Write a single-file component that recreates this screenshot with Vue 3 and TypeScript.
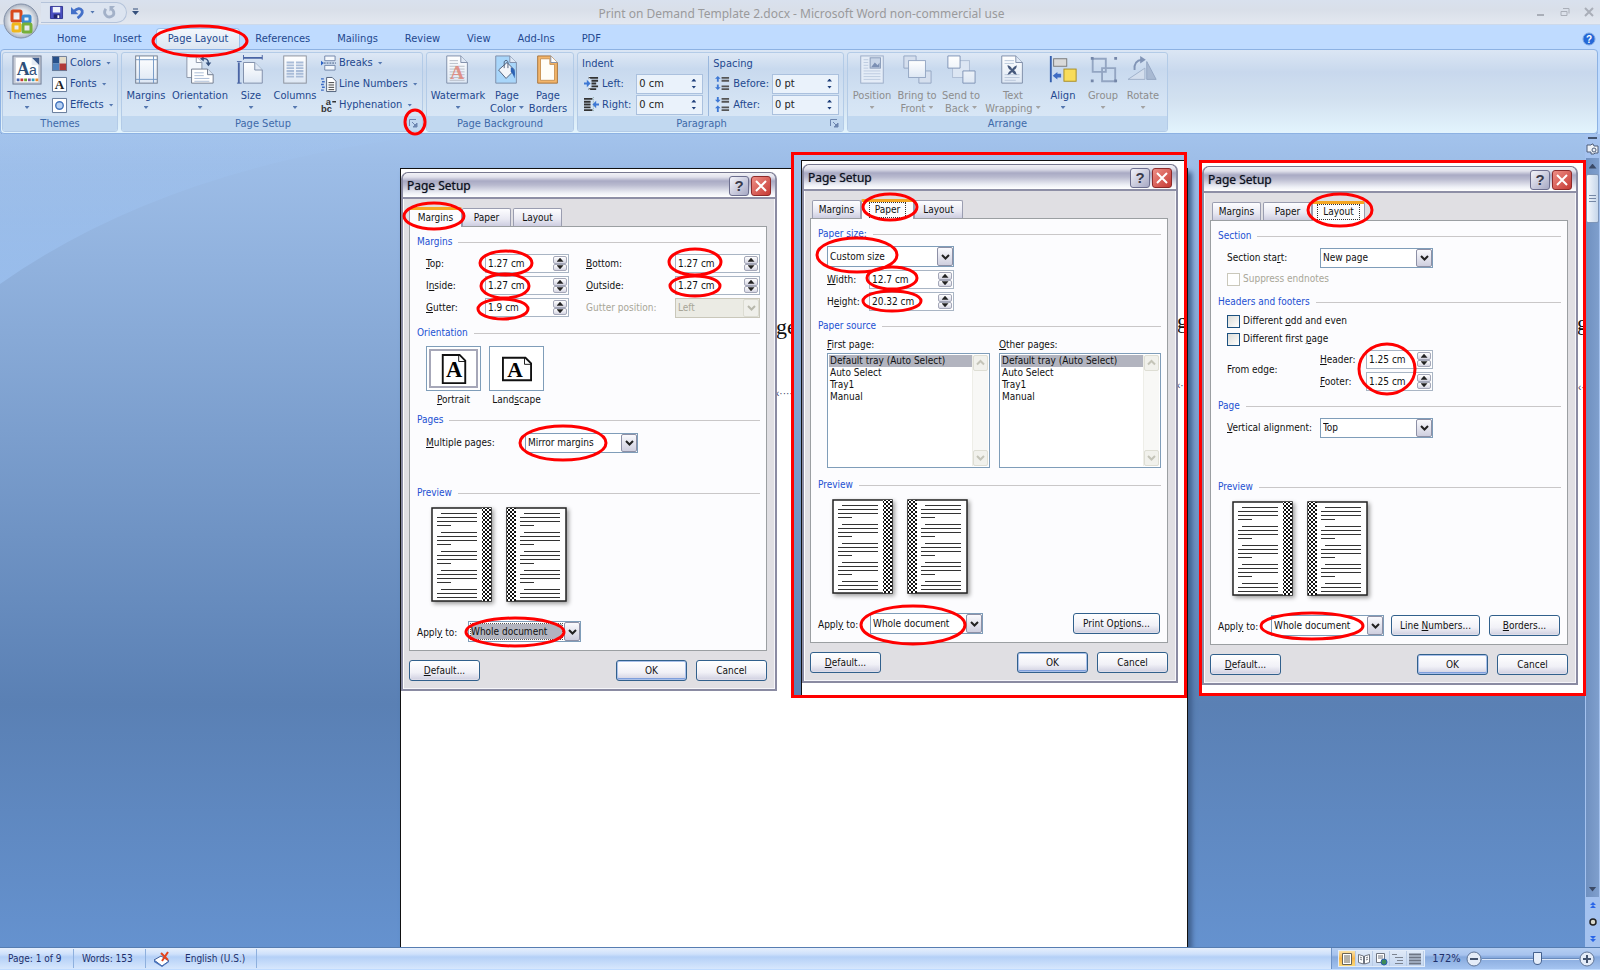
<script setup lang="ts">
import { h, ref } from 'vue'

const K = (props: { t: string }) => {
  const at = props.t.indexOf('&')
  if (at < 0) return h('span', props.t)
  return h('span', [props.t.slice(0, at), h('u', props.t.charAt(at + 1)), props.t.slice(at + 2)])
}
K.props = ['t']

const page = '<path d="M4 1h15l7 7v22H4z" fill="url(#paper)" stroke="#7d8ca8"/><path d="M19 1v7h7" fill="#dfe8f5" stroke="#7d8ca8"/>'

const icons: Record<string, string> = {
  themes:
    '<rect x="1" y="1" width="30" height="30" fill="#c6cbd6" stroke="#6f7c94"/><rect x="4" y="3" width="24" height="26" fill="#fff"/><path d="M21 3h8v8z" fill="#3c5a8c"/><path d="M21 3v8h8z" fill="#e6ecf5"/><text x="5" y="21" font-family="Liberation Serif" font-weight="bold" font-size="19" fill="#2f5079">A</text><text x="18" y="21" font-family="Liberation Sans" font-size="15" fill="#2f5079">a</text><path d="M5 25h3v3h-3z" fill="#4664b4"/><path d="M9 25h3v3h-3z" fill="#c53a35"/><path d="M13 25h3v3h-3z" fill="#6fa32e"/><path d="M17 25h3v3h-3z" fill="#7952a0"/><path d="M21 25h3v3h-3z" fill="#329fb8"/><path d="M25 25h3v3h-3z" fill="#e98a2e"/>',
  margins:
    '<rect x="5" y="1" width="23" height="29" fill="url(#paper)" stroke="#6f7a8c"/><path d="M9 1v29M24 1v29M5 5h23M5 26h23" stroke="#7397c4"/>',
  orientation:
    '<path d="M2 2h10l6 6v16H2z" fill="#f4f8fd" stroke="#8a94a6"/><path d="M12 2v6h6" fill="#fff" stroke="#8a94a6"/><path d="M7 15h17l6 6v9H7z" fill="#fff" stroke="#6f7a8c"/><path d="M24 15v6h6" fill="#dfe8f5" stroke="#6f7a8c"/><path d="M10 19h10M10 22h10M10 25h16M10 28h16" stroke="#a8bad4"/><path d="M19 4q6-1 6 5" fill="none" stroke="#35507c" stroke-width="1.500"/><path d="M22 8h6l-3 4zM16 4l4-3v6z" fill="#35507c"/>',
  size:
    '<path d="M8 8h12l8 8v14H8z" fill="url(#paper)" stroke="#7d8ca8"/><path d="M20 8v8h8" fill="#dfe8f5" stroke="#7d8ca8"/><path d="M8 3h20M3 8v22" stroke="#4a64a4" stroke-width="2"/><path d="M8 0v5M28 0v5M1 7h5M1 30h5" stroke="#4a64a4"/>',
  columns:
    '<rect x="4" y="1" width="24" height="29" fill="url(#paper)" stroke="#8a8f9a"/><path d="M7 8h8M7 11h8M7 14h8M7 17h8M7 20h8M7 23h8M17 8h8M17 11h8M17 14h8M17 17h8M17 20h8M17 23h8" stroke="#a9bcd8" stroke-width="2"/>',
  watermark:
    page + '<path d="M7 6h9M7 9h9M7 12h16M7 15h16M7 18h16M7 21h16M7 24h16M7 27h16" stroke="#b8bdc8"/><text x="15" y="26" text-anchor="middle" font-family="Liberation Serif" font-weight="bold" font-size="21" fill="#e08478" fill-opacity="0.85">A</text>',
  color:
    '<path d="M4 1h15l7 7v22H4z" fill="#a9d6fa" stroke="#7d8ca8"/><path d="M19 1v7h7" fill="#dfe8f5" stroke="#7d8ca8"/><path d="M7 16l9-8 8 8-9 9z" fill="#f2f5fa" stroke="#4d5d78"/><path d="M13 14V7q2-3 4 0v7" fill="none" stroke="#4d5d78"/><path d="M20 13q6 1 4 12-2-6-4-7z" fill="#2c62b4"/>',
  borders:
    '<path d="M5 1h14l7 7v22H5z" fill="#f3b56a" stroke="#a5713a"/><path d="M8 4h10v6h5v17H8z" fill="#fffdf8" stroke="#c99152"/><path d="M19 1v7h7" fill="#fff" stroke="#7d8ca8"/>',
  position:
    '<rect x="4" y="1" width="24" height="29" fill="#e4ecf7" stroke="#9aabc6"/><path d="M7 5h5M7 8h5M7 11h5M7 14h5M7 17h18M7 20h18M7 23h18M7 26h18" stroke="#bccbe0"/><rect x="14" y="3" width="11" height="11" fill="#c8d5e8" stroke="#8799b8"/><path d="M15 13l4-5 3 3 2-3v5z" fill="#7c90b4"/>',
  front:
    '<path d="M2 1h13v13H2zM18 17h13v13H18z" fill="#d5dfee" stroke="#93a5c2"/><rect x="7" y="6" width="18" height="18" fill="url(#paper)" stroke="#93a5c2"/>',
  back:
    '<rect x="7" y="6" width="18" height="18" fill="#dce6f3" stroke="#aebdd4"/><path d="M2 1h13v13H2zM18 17h13v13H18z" fill="url(#paper)" stroke="#7d91b4"/>',
  wrap:
    page + '<path d="M7 6h10M7 9h10M7 21h16M7 24h16M7 27h12" stroke="#b9c6da"/><path d="M10 11q1 5 4 5-3 2-4 5 3 0 5-3 2 3 5 3-1-4-3-5 3-1 3-5-3 1-5 4-2-4-5-4z" fill="#46597c"/>',
  align:
    '<path d="M3 1v28" stroke="#355fae" stroke-width="2"/><rect x="6" y="4" width="14" height="8" fill="#d9d9d9" stroke="#777"/><rect x="17" y="15" width="13" height="13" fill="#f8dc5a" stroke="#a88b20"/><path d="M5 22l5-4v2h4v4h-4v2z" fill="#3e6cc4"/>',
  group:
    '<path d="M5 4h14v14H5zM15 14h14v14H15z" fill="none" stroke="#93a5c2" stroke-width="2"/><path d="M3 2h3v3H3zM28 2h3v3h-3zM3 26h3v3H3zM28 26h3v3h-3z" fill="#7486a8"/>',
  rotate:
    '<path d="M0 26L18 14v12z" fill="#d3deed" stroke="#9fb0ca"/><path d="M20 26V7l10 19z" fill="#a8b9d2" stroke="#93a5c2"/><path d="M7 16q-1-10 8-11" fill="none" stroke="#8194b6" stroke-width="2"/><path d="M13 1l6 4-6 4z" fill="#8194b6"/>',
  colors:
    '<path d="M0 0h8v8H0z" fill="#27508a"/><path d="M8 0h8v8H8z" fill="#e3dcc9"/><path d="M0 8h8v8H0z" fill="#4f81bd"/><path d="M8 8h8v8H8z" fill="#b23a37"/><path d="M0.500 0.500h15v15h-15z" fill="none" stroke="#6b7c98"/>',
  fonts:
    '<path d="M0.500 0.500h15v15h-15z" fill="#fff" stroke="#5f7595"/><text x="8" y="13" text-anchor="middle" font-family="Liberation Serif" font-weight="bold" font-size="14" fill="#222">A</text>',
  effects:
    '<path d="M0.500 0.500h15v15h-15z" fill="#fff" stroke="#5f7595"/><circle cx="8" cy="8" r="4" fill="#b8d2f4" stroke="#4475bd" stroke-width="1.500"/>',
  breaks:
    '<path d="M4 0h11v5H4zM4 10h11v5H4z" fill="#f4f8fd" stroke="#6f83a8"/><path d="M3 7.500h13" stroke="#35507c" stroke-dasharray="2 1"/><path d="M0 5l3 2.500-3 2.500z" fill="#2d62c4"/>',
  lines:
    '<path d="M6 0.500h6l4 4v11H6z" fill="#fff" stroke="#4d5d78"/><path d="M8 6h6M8 8.500h6M8 11h6M8 13.500h6" stroke="#333"/><path d="M0 2h3M1 5h3M0 8h3M1 11h3M0 14h3" stroke="#3e6cc4" stroke-width="1.500"/>',
  hyphen:
    '<text x="0" y="15" font-family="Liberation Sans" font-weight="bold" font-size="10" fill="#333">bc</text><text x="5" y="7" font-family="Liberation Sans" font-weight="bold" font-size="10" fill="#333">a</text><path d="M12 4h4" stroke="#333" stroke-width="1.500"/>',
  indentL:
    '<path d="M5 2h10M8 5h7M8 8h5M8 11h7M5 14h8" stroke="#333" stroke-width="2"/><path d="M6 0v16" stroke="#fff" stroke-dasharray="1 1"/><path d="M0 7h3V4l4 4-4 4V9H0z" fill="#3e78d4"/>',
  indentR:
    '<path d="M0 2h9M0 5h7M0 8h7M0 11h7M0 14h9" stroke="#333" stroke-width="2"/><path d="M10 0v16" stroke="#8aa" stroke-dasharray="1 1"/><path d="M16 7h-3V4L9 8l4 4V9h3z" fill="#3e78d4"/>',
  before:
    '<path d="M7 2h8M7 5h8M7 11h8M7 14h8" stroke="#555" stroke-width="2"/><path d="M3 0l3 3H4v3H2V3H0zM3 15l3-3H4V9H2v3H0z" fill="#3e78d4"/>',
  after:
    '<path d="M7 2h8M7 5h8M7 11h8M7 14h8" stroke="#555" stroke-width="2"/><path d="M3 6l3-3H4V0H2v3H0zM3 9l3 3H4v4H2v-4H0z" fill="#3e78d4"/>',
  launch: '<path d="M0.500 7V0.500H7" fill="none" stroke="#6d86b0"/><path d="M3 3l4 4M8 4v4H4z" stroke="#6d86b0" fill="#6d86b0"/>',
}

interface Big { icon: string; lines: string[]; w: string; arrow: boolean; off?: boolean }
const setupBig: Big[] = [
  { icon: 'margins', lines: ['Margins'], w: 'w46', arrow: true },
  { icon: 'orientation', lines: ['Orientation'], w: 'w62', arrow: true },
  { icon: 'size', lines: ['Size'], w: 'w40', arrow: true },
  { icon: 'columns', lines: ['Columns'], w: 'w48', arrow: true },
]
const backBig: Big[] = [
  { icon: 'watermark', lines: ['Watermark'], w: 'w60', arrow: true },
  { icon: 'color', lines: ['Page', 'Color'], w: 'w38', arrow: true },
  { icon: 'borders', lines: ['Page', 'Borders'], w: 'w44', arrow: false },
]
const arrangeBig: Big[] = [
  { icon: 'position', lines: ['Position'], w: 'w46', arrow: true, off: true },
  { icon: 'front', lines: ['Bring to', 'Front'], w: 'w44', arrow: true, off: true },
  { icon: 'back', lines: ['Send to', 'Back'], w: 'w44', arrow: true, off: true },
  { icon: 'wrap', lines: ['Text', 'Wrapping'], w: 'w60', arrow: true, off: true },
  { icon: 'align', lines: ['Align'], w: 'w40', arrow: true },
  { icon: 'group', lines: ['Group'], w: 'w40', arrow: true, off: true },
  { icon: 'rotate', lines: ['Rotate'], w: 'w40', arrow: true, off: true },
]
const themeSmall = [['colors', 'Colors'], ['fonts', 'Fonts'], ['effects', 'Effects']]
const setupSmall = [['breaks', 'Breaks'], ['lines', 'Line Numbers'], ['hyphen', 'Hyphenation']]
const paragraph = [
  { title: 'Indent', rows: [['indentL', 'Left:', '0 cm'], ['indentR', 'Right:', '0 cm']] },
  { title: 'Spacing', rows: [['before', 'Before:', '0 pt'], ['after', 'After:', '0 pt']] },
]
const ribbonTabs = ['Home', 'Insert', 'Page Layout', 'References', 'Mailings', 'Review', 'View', 'Add-Ins', 'PDF']

const dialogs = ['Margins', 'Paper', 'Layout']
const marginRows = [
  ['&Top:', '1.27 cm', '&Bottom:', '1.27 cm'],
  ['I&nside:', '1.27 cm', '&Outside:', '1.27 cm'],
  ['&Gutter:', '1.9 cm', '', ''],
]
const sizeRows = [['&Width:', '12.7 cm'], ['H&eight:', '20.32 cm']]
const trays = ['Default tray (Auto Select)', 'Auto Select', 'Tray1', 'Manual']
const edgeRows = [['&Header:', '1.25 cm'], ['&Footer:', '1.25 cm']]
const firstTray = ref(trays[0])
const otherTray = ref(trays[0])
const zoomLevel = ref(58)

const rings = [
  [200, 41, 47, 15], [415, 122, 10, 12],
  [434, 216, 30, 13], [506, 263, 26, 12], [505, 286, 24, 12], [503, 309, 25, 10],
  [695, 262, 26, 13], [695, 286, 25, 10], [563, 443, 43, 17], [515, 632, 49, 14],
  [890, 207, 27, 13], [857, 255, 40, 17], [892, 278, 25, 11], [892, 301, 29, 10], [913, 625, 52, 19],
  [1340, 210, 32, 16], [1387, 369, 28, 25], [1312, 626, 51, 13],
]
const textLines = Array.from({ length: 19 }, (_, i) => ({
  y: 6 + i * 4 + Math.floor(i / 4) * 3,
  kind: i % 4,
}))
</script>

<template>
  <div class="app">
    <svg class="defs" aria-hidden="true">
      <defs>
        <linearGradient id="paper" x1="0" y1="0" x2="0" y2="1"><stop offset="0" stop-color="#fff" /><stop offset="1" stop-color="#dde7f4" /></linearGradient>
        <linearGradient id="swoosh" x1="0" y1="0" x2="0" y2="1"><stop offset="0" stop-color="#a5cdff" stop-opacity="0.05" /><stop offset="1" stop-color="#a5cdff" stop-opacity="0.45" /></linearGradient>
        <pattern id="check" width="4" height="4" patternUnits="userSpaceOnUse"><rect width="4" height="4" fill="#fff" /><path d="M0 0h2v2H0zM2 2h2v2H2z" fill="#111" /></pattern>
      </defs>
    </svg>

    <header class="titlebar">
      <button class="orb" aria-label="Office Button">
        <svg viewBox="0 0 38 38">
          <defs><radialGradient id="orbg"><stop offset="0" stop-color="#fff" /><stop offset="0.700" stop-color="#dfe3e9" /><stop offset="1" stop-color="#aab3c2" /></radialGradient></defs>
          <circle cx="19" cy="19" r="17" fill="url(#orbg)" stroke="#8391a8" />
          <g fill="none" stroke-width="3">
            <rect x="10" y="9" width="9" height="10" rx="1" stroke="#d8491c" />
            <rect x="21" y="14" width="7" height="6" rx="1" stroke="#3b8ad2" />
            <rect x="11" y="22" width="7" height="7" rx="1" stroke="#f0b81c" />
            <rect x="21" y="22" width="8" height="8" rx="1" stroke="#76b03a" />
          </g>
        </svg>
      </button>
      <div class="qat">
        <button aria-label="Save"><svg viewBox="0 0 14 14"><path d="M0.500 0.500h13v13h-13z" fill="#4a4fc0" stroke="#2f3390" /><path d="M3 1h8v6H3z" fill="#eef2fb" /><path d="M4 9h7v4H4z" fill="#23266e" /><path d="M8 10h2v3H8z" fill="#fff" /></svg></button>
        <button aria-label="Undo"><svg viewBox="0 0 14 14"><path d="M3 6q6-6 9-1 1 4-5 8" fill="none" stroke="#4470c8" stroke-width="3" /><path d="M0 1v8h8z" fill="#4470c8" /></svg></button>
        <i class="tri"></i>
        <button aria-label="Redo"><svg viewBox="0 0 14 14"><path d="M3 3q-3 5 1 8 4 2 7-1 2-4-2-7" fill="none" stroke="#a3b1c8" stroke-width="3" /><path d="M7 0h6L7 6z" fill="#a3b1c8" /></svg></button>
      </div>
      <button class="more" aria-label="Customize Quick Access Toolbar"><svg viewBox="0 0 7 8"><path d="M1 1h5" stroke="#35507c" /><path d="M0 3h7l-3.500 4z" fill="#35507c" /></svg></button>
      <h1>Print on Demand Template 2.docx - Microsoft Word non-commercial use</h1>
      <div class="winbtns">
        <button aria-label="Minimize"><svg viewBox="0 0 10 10"><path d="M1 8h7" stroke="#a9aeb8" stroke-width="2" /></svg></button>
        <button aria-label="Restore"><svg viewBox="0 0 10 10"><path d="M3 1.500h6v5M1 4.500h6v4H1z" fill="none" stroke="#a9aeb8" /></svg></button>
        <button aria-label="Close"><svg viewBox="0 0 10 10"><path d="M1 1l8 8M9 1l-8 8" stroke="#a9aeb8" stroke-width="2" /></svg></button>
      </div>
    </header>

    <nav class="tabs">
      <button v-for="t in ribbonTabs" :key="t" :class="{ on: t === 'Page Layout' }">{{ t }}</button>
      <button class="help" aria-label="Help"><svg viewBox="0 0 14 14"><circle cx="7" cy="7" r="6" fill="#2468d8" stroke="#7ba4e0" /><text x="7" y="11" text-anchor="middle" font-family="Liberation Sans" font-weight="bold" font-size="10" fill="#fff">?</text></svg></button>
    </nav>

    <section class="ribbon">
      <div class="grp g1">
        <div class="cmds">
          <button class="big w46"><svg viewBox="0 0 32 32" v-html="icons.themes" /><span>Themes</span><i class="tri"></i></button>
          <div class="small">
            <button v-for="s in themeSmall" :key="s[1]"><svg viewBox="0 0 16 16" v-html="icons[s[0]]" />{{ s[1] }}<i class="tri"></i></button>
          </div>
        </div>
        <h2>Themes</h2>
      </div>
      <div class="grp g2">
        <div class="cmds">
          <button v-for="b in setupBig" :key="b.icon" class="big" :class="b.w"><svg viewBox="0 0 32 32" v-html="icons[b.icon]" /><span>{{ b.lines[0] }}</span><i class="tri"></i></button>
          <div class="small">
            <button v-for="s in setupSmall" :key="s[1]"><svg viewBox="0 0 16 16" v-html="icons[s[0]]" />{{ s[1] }}<i class="tri"></i></button>
          </div>
        </div>
        <h2 class="haslaunch">Page Setup<button class="launch" aria-label="Page Setup dialog"><svg viewBox="0 0 9 9" v-html="icons.launch" /></button></h2>
      </div>
      <div class="grp g3">
        <div class="cmds">
          <button v-for="b in backBig" :key="b.icon" class="big" :class="b.w"><svg viewBox="0 0 32 32" v-html="icons[b.icon]" /><span>{{ b.lines[0] }}</span><span v-if="b.lines[1]">{{ b.lines[1] }}<i v-if="b.arrow" class="tri"></i></span><i v-else class="tri"></i></button>
        </div>
        <h2>Page Background</h2>
      </div>
      <div class="grp g4">
        <div class="cmds para">
          <div v-for="p in paragraph" :key="p.title" class="pcol">
            <h3>{{ p.title }}</h3>
            <div v-for="r in p.rows" :key="r[1]" class="prow">
              <svg viewBox="0 0 16 16" v-html="icons[r[0]]" />
              <label :for="'p' + r[1]">{{ r[1] }}</label>
              <span class="pspin"><input :id="'p' + r[1]" type="text" :value="r[2]" /><span><button aria-label="Increase"><i class="triup"></i></button><button aria-label="Decrease"><i class="tri"></i></button></span></span>
            </div>
          </div>
        </div>
        <h2 class="haslaunch">Paragraph<button class="launch" aria-label="Paragraph dialog"><svg viewBox="0 0 9 9" v-html="icons.launch" /></button></h2>
      </div>
      <div class="grp g5">
        <div class="cmds">
          <button v-for="b in arrangeBig" :key="b.icon" class="big" :class="[b.w, { off: b.off }]" :disabled="b.off"><svg viewBox="0 0 32 32" v-html="icons[b.icon]" /><span>{{ b.lines[0] }}</span><span v-if="b.lines[1]">{{ b.lines[1] }}<i class="tri"></i></span><i v-else class="tri"></i></button>
        </div>
        <h2>Arrange</h2>
      </div>
    </section>

    <main class="work">
      <div class="canvas">
        <svg class="sweep" viewBox="0 0 440 170" aria-hidden="true"><path d="M0 0h440Q170 30 0 150z" fill="url(#swoosh)" /></svg>
        <article class="sheet"><span class="frag f1">ge</span><span class="dots d1">‹·······</span></article>

        <div v-for="(d, di) in dialogs" :key="d" class="shot" :class="'shot' + di">
          <div v-if="di === 1" class="under"></div>
          <span v-if="di > 0" class="frag">g</span><span v-if="di > 0" class="dots">‹··</span>
          <section class="dialog" role="dialog" aria-label="Page Setup">
            <header>
              <h2>Page Setup</h2>
              <button class="q" aria-label="Help">?</button>
              <button class="x" aria-label="Close"><svg viewBox="0 0 12 12"><path d="M1 1l10 10M11 1L1 11" stroke="#fff" stroke-width="2" /></svg></button>
            </header>
            <div class="dtabs">
              <button v-for="(t, ti) in dialogs" :key="t" :class="{ on: ti === di, foc: ti === di && di > 0 }"><span>{{ t }}</span></button>
            </div>
            <div class="panel">
              <div v-if="di === 0" class="upper">
                <h4>Margins</h4>
                <div class="mgrid">
                  <template v-for="(r, ri) in marginRows" :key="ri">
                    <label :for="'ma' + ri"><K :t="r[0]" /></label>
                    <span class="spin"><input :id="'ma' + ri" type="text" :value="r[1]" /><span><button aria-label="Increase"><i class="triup"></i></button><button aria-label="Decrease"><i class="tri"></i></button></span></span>
                    <template v-if="r[2]">
                      <label class="c3" :for="'mb' + ri"><K :t="r[2]" /></label>
                      <span class="spin"><input :id="'mb' + ri" type="text" :value="r[3]" /><span><button aria-label="Increase"><i class="triup"></i></button><button aria-label="Decrease"><i class="tri"></i></button></span></span>
                    </template>
                    <template v-else>
                      <label class="c3 dim" for="gpos">Gutter position:</label>
                      <span class="combo dis"><select id="gpos" disabled><option>Left</option></select><i class="drop"><svg viewBox="0 0 9 8"><path d="M1 2l3.500 3.500L8 2" /></svg></i></span>
                    </template>
                  </template>
                </div>
                <h4 class="mt8">Orientation</h4>
                <div class="orients">
                  <button class="sel"><span><svg viewBox="0 0 30 32"><path d="M3 1h18l6 6v24H3z" fill="#fff" stroke="#111" stroke-width="2" /><path d="M20 1v7h7" fill="none" stroke="#111" /><text x="15" y="24" text-anchor="middle" font-family="Liberation Serif" font-weight="bold" font-size="24">A</text></svg></span><K t="&Portrait" /></button>
                  <button><span><svg viewBox="0 0 32 30"><path d="M1 3h24l6 6v18H1z" fill="#fff" stroke="#111" stroke-width="2" /><path d="M24 3v7h7" fill="none" stroke="#111" /><text x="14" y="23" text-anchor="middle" font-family="Liberation Serif" font-weight="bold" font-size="23">A</text></svg></span><K t="Land&scape" /></button>
                </div>
                <h4 class="mt5">Pages</h4>
                <div class="row r1">
                  <label class="l99" for="multi"><K t="&Multiple pages:" /></label>
                  <span class="combo w113"><select id="multi"><option>Mirror margins</option></select><i class="drop"><svg viewBox="0 0 9 8"><path d="M1 2l3.500 3.500L8 2" /></svg></i></span>
                </div>
              </div>

              <div v-else-if="di === 1" class="upper">
                <h4>Paper size:</h4>
                <div class="sizes">
                  <span class="combo"><select aria-label="Paper size"><option>Custom size</option></select><i class="drop"><svg viewBox="0 0 9 8"><path d="M1 2l3.500 3.500L8 2" /></svg></i></span>
                  <template v-for="(r, ri) in sizeRows" :key="ri">
                    <label :for="'sz' + ri"><K :t="r[0]" /></label>
                    <span class="spin"><input :id="'sz' + ri" type="text" :value="r[1]" /><span><button aria-label="Increase"><i class="triup"></i></button><button aria-label="Decrease"><i class="tri"></i></button></span></span>
                  </template>
                </div>
                <h4 class="mt6">Paper source</h4>
                <div class="lists">
                  <div>
                    <label for="tray1"><K t="&First page:" /></label>
                    <div class="list"><select id="tray1" v-model="firstTray" size="4"><option v-for="t in trays" :key="t" :value="t">{{ t }}</option></select><span class="bar"><i><svg viewBox="0 0 9 8"><path d="M1 5.500L4.500 2 8 5.500" /></svg></i><i><svg viewBox="0 0 9 8"><path d="M1 2l3.500 3.500L8 2" /></svg></i></span></div>
                  </div>
                  <div>
                    <label for="tray2"><K t="&Other pages:" /></label>
                    <div class="list"><select id="tray2" v-model="otherTray" size="4"><option v-for="t in trays" :key="t" :value="t">{{ t }}</option></select><span class="bar"><i><svg viewBox="0 0 9 8"><path d="M1 5.500L4.500 2 8 5.500" /></svg></i><i><svg viewBox="0 0 9 8"><path d="M1 2l3.500 3.500L8 2" /></svg></i></span></div>
                  </div>
                </div>
              </div>

              <div v-else class="upper">
                <h4>Section</h4>
                <div class="row r2">
                  <label class="l93" for="secstart"><K t="Section sta&rt:" /></label>
                  <span class="combo w113"><select id="secstart"><option>New page</option></select><i class="drop"><svg viewBox="0 0 9 8"><path d="M1 2l3.500 3.500L8 2" /></svg></i></span>
                </div>
                <label class="chk first dim"><input type="checkbox" disabled />Suppress endnotes</label>
                <h4 class="mt6">Headers and footers</h4>
                <label class="chk second"><input type="checkbox" /><K t="Different &odd and even" /></label>
                <label class="chk"><input type="checkbox" /><K t="Different first &page" /></label>
                <div class="edge">
                  <span class="from">From edge:</span>
                  <template v-for="(r, ri) in edgeRows" :key="ri">
                    <label :for="'ed' + ri"><K :t="r[0]" /></label>
                    <span class="spin"><input :id="'ed' + ri" type="text" :value="r[1]" /><span><button aria-label="Increase"><i class="triup"></i></button><button aria-label="Decrease"><i class="tri"></i></button></span></span>
                  </template>
                </div>
                <h4 class="mt6">Page</h4>
                <div class="row r2">
                  <label class="l93" for="valign"><K t="&Vertical alignment:" /></label>
                  <span class="combo w113"><select id="valign"><option>Top</option></select><i class="drop"><svg viewBox="0 0 9 8"><path d="M1 2l3.500 3.500L8 2" /></svg></i></span>
                </div>
              </div>

              <h4>Preview</h4>
              <div class="previews">
                <svg v-for="side in 2" :key="side" viewBox="0 0 61 95" aria-hidden="true">
                  <rect x="1" y="1" width="59" height="93" fill="#fff" stroke="#222" stroke-width="1.500" />
                  <rect :x="side === 1 ? 51 : 1" y="1" width="9" height="93" fill="url(#check)" />
                  <path v-for="l in textLines" :key="l.y" :d="`M${(side === 1 ? 6 : 14) + (l.kind === 0 ? 4 : 0)} ${l.y}.500H${(side === 1 ? 6 : 14) + (l.kind === 3 ? 14 : 40)}`" stroke="#333" />
                </svg>
              </div>
              <div class="apply">
                <label :for="'ap' + di" :class="di === 1 ? 'l52' : di === 0 ? 'l51' : 'l53'"><K t="Appl&y to:" /></label>
                <span class="combo w113" :class="{ hot: di === 0 }"><select :id="'ap' + di"><option>Whole document</option></select><i class="drop"><svg viewBox="0 0 9 8"><path d="M1 2l3.500 3.500L8 2" /></svg></i></span>
                <button v-if="di === 1" class="btn push w87"><K t="Print Op&tions..." /></button>
                <template v-if="di === 2"><button class="btn push w89"><K t="Line &Numbers..." /></button><button class="btn w71"><K t="&Borders..." /></button></template>
              </div>
            </div>
            <footer>
              <button class="btn w71"><K t="&Default..." /></button>
              <button class="btn w71 push ok">OK</button>
              <button class="btn w71">Cancel</button>
            </footer>
          </section>
        </div>
      </div>

      <aside class="scroll">
        <div class="tools"><svg viewBox="0 0 12 22"><path d="M2 3h9" stroke="#44546f" stroke-width="2" /><path d="M1 10h4l1-1h1l1 2h4v7H9l-1 1H5v-2H1z" fill="#eef2f8" stroke="#4d5d78" /><circle cx="8" cy="15" r="2" fill="none" stroke="#4d5d78" /></svg></div>
        <div class="track">
          <button aria-label="Scroll up"><i class="triup"></i></button>
          <div class="thumb"><i></i></div>
          <button aria-label="Scroll down"><i class="tri"></i></button>
        </div>
        <div class="jump">
          <button aria-label="Previous Page"><svg viewBox="0 0 8 8"><path d="M1 4l3-3 3 3zM1 7l3-3 3 3z" fill="#2a66e8" /></svg></button>
          <button aria-label="Select Browse Object"><svg viewBox="0 0 8 8"><circle cx="4" cy="4" r="3" fill="#d9d9cc" stroke="#222" stroke-width="1.500" /></svg></button>
          <button aria-label="Next Page"><svg viewBox="0 0 8 8"><path d="M1 1l3 3 3-3zM1 4l3 3 3-3z" fill="#2a66e8" /></svg></button>
        </div>
      </aside>
    </main>

    <footer class="status">
      <span class="s1">Page: 1 of 9</span>
      <span class="s2">Words: 153</span>
      <button class="s3" aria-label="Proofing"><svg viewBox="0 0 16 16"><path d="M0 9l7-4 8 5-7 5z" fill="#fff" stroke="#3c5d9c" /><path d="M0 9v2l8 5 7-5v-1l-7 5z" fill="#4a74bd" /><path d="M7 2l7 7M14 1L8 10" stroke="#e2431e" stroke-width="2" /></svg></button>
      <span class="s4">English (U.S.)</span>
      <div class="sright">
        <div class="views">
          <button v-for="v in 5" :key="v" :class="{ on: v === 1 }" :aria-label="'View ' + v">
            <svg viewBox="0 0 12 12">
              <path v-if="v === 1" d="M1.500 0.500h9v11h-9zM3 3h6M3 5h6M3 7h6M3 9h6" fill="#fff" stroke="#6b6455" />
              <path v-else-if="v === 2" d="M0.500 1.500l5 1.500v8l-5-1.500zM11.500 1.500l-5 1.500v8l5-1.500zM2 4l2 1M2 6l2 1M8 5l2-1M8 7l2-1" fill="#fff" stroke="#6e7480" />
              <g v-else-if="v === 3"><path d="M1.500 0.500h8v9h-8zM3 3h5M3 5h5" fill="#fff" stroke="#6e7480" /><circle cx="9" cy="9" r="3" fill="#3d8a58" stroke="#2c5fae" /></g>
              <path v-else-if="v === 4" d="M0 1.500h5M3 4.500h8M5 7.500h6M3 10.500h8" fill="none" stroke="#7c8491" />
              <path v-else d="M0 1.500h12M0 4.500h12M0 7.500h12M0 10.500h12" fill="none" stroke="#6e7685" stroke-width="2" />
            </svg>
          </button>
        </div>
        <span class="pct">172%</span>
        <button class="zb" aria-label="Zoom Out"><svg viewBox="0 0 16 16"><circle cx="8" cy="8" r="7" fill="#e4ecf8" stroke="#5f7496" /><path d="M4 8h8" stroke="#44546f" stroke-width="2" /></svg></button>
        <input v-model="zoomLevel" class="zoom" type="range" min="0" max="100" aria-label="Zoom" />
        <button class="zb" aria-label="Zoom In"><svg viewBox="0 0 16 16"><circle cx="8" cy="8" r="7" fill="#e4ecf8" stroke="#5f7496" /><path d="M4 8h8M8 4v8" stroke="#44546f" stroke-width="2" /></svg></button>
      </div>
    </footer>

    <svg class="rings" aria-hidden="true">
      <ellipse v-for="(r, i) in rings" :key="i" :cx="r[0]" :cy="r[1]" :rx="r[2]" :ry="r[3]" />
    </svg>
  </div>
</template>

<style>
body { background: #fff; overflow: hidden; }
</style>

<style scoped>
.app { position: relative; display: flex; flex-direction: column; height: 100vh; overflow: hidden; padding-bottom: 1px; box-sizing: border-box; font: 11px/14px "DejaVu Sans Condensed", "Noto Sans", sans-serif; color: #23488f; background: #bfdbff; }
.app *, .app *::before { box-sizing: border-box; }
button { font: inherit; color: inherit; border: 0; background: none; padding: 0; margin: 0; display: flex; align-items: center; justify-content: center; white-space: nowrap; }
input, select { font: inherit; color: inherit; margin: 0; }
h1, h2, h3, h4 { margin: 0; font: inherit; }
svg { display: block; flex: none; overflow: visible; }
.defs { position: absolute; width: 0; height: 0; }
.tri, .triup { display: inline-block; flex: none; width: 5px; height: 3px; background: #5578b0; clip-path: polygon(0 0, 100% 0, 50% 100%); }
.triup { clip-path: polygon(50% 0, 100% 100%, 0 100%); }

.titlebar { display: flex; align-items: center; height: 25px; flex: none; padding: 0 6px 0 1px; background: linear-gradient(#d9e1ee, #d9dfe9 40%, #e3e8f0); border-bottom: 1px solid #ccd9eb; }
.orb { width: 40px; height: 40px; align-self: flex-start; margin-top: 1px; z-index: 2; }
.orb svg { width: 38px; height: 38px; }
.qat { display: flex; align-items: center; gap: 8px; height: 21px; width: 86px; padding-left: 9px; border: 1px solid #b4c3da; border-left: 0; border-radius: 0 11px 11px 0; background: #dce4f0; }
.qat svg { width: 13px; height: 13px; }
.qat .tri { margin-left: -2px; }
.more { margin-left: 5px; width: 7px; }
.more svg { width: 7px; height: 8px; }
.titlebar h1 { flex: 1; text-align: center; font: 12px/16px "Noto Sans", sans-serif; color: #9a9a9c; padding: 3px 72px 0 0; }
.winbtns { display: flex; gap: 14px; }
.winbtns svg { width: 10px; height: 10px; }

.tabs { display: flex; height: 24px; flex: none; padding: 3px 4px 0 43px; background: #bfdbff; }
.tabs button { padding: 0 13px 0 14px; border-radius: 4px 4px 0 0; }
.tabs .on { padding: 0 11px; margin: 0 1px; background: linear-gradient(#f3f7fc, #dbe5f2); border: 1px solid #9dbfe9; border-bottom: 0; }
.tabs .help { margin-left: auto; padding: 0; }
.help svg { width: 14px; height: 14px; }

.ribbon { display: flex; gap: 3px; height: 85px; flex: none; padding: 2px 2px 1px 1px; margin: 0 2px 0 0; background: linear-gradient(#dbe6f4 0, #c8d8ed 22px, #d2e1f0 50px, #e3f4fd); border: 1px solid #8db2e3; border-radius: 4px; box-shadow: 0 1px 0 #6f93c4; }
.grp { display: flex; flex-direction: column; border: 1px solid #b3cbe7; border-radius: 3px; overflow: hidden; background: linear-gradient(#dee8f5 0, #c8d9ee 16px, #d5e4f4 50px, #dbe9f7); }
.g1 { width: 116px; } .g2 { width: 302px; } .g3 { width: 148px; } .g4 { width: 267px; } .g5 { width: 321px; }
.cmds { display: flex; flex: 1; padding: 2px 0 0 1px; }
.grp h2 { position: relative; display: flex; justify-content: center; align-items: center; height: 15px; color: #3e6aaa; background: #c1d8f0; }
.grp .haslaunch { padding-right: 18px; }
.launch { position: absolute; right: 4px; top: 3px; }
.launch svg { width: 9px; height: 9px; }
.big { flex-direction: column; justify-content: flex-start; line-height: 13px; }
.big svg { width: 30px; height: 30px; margin-bottom: 4px; }
.big > .tri { margin-top: 4px; }
.big span .tri { margin-left: 3px; vertical-align: 3px; }
.off { color: #8d8d8d; } .off .tri { background: #a3a3a3; }
.w38 { width: 38px; } .w40 { width: 40px; } .w44 { width: 44px; } .w46 { width: 46px; } .w48 { width: 48px; } .w60 { width: 60px; } .w62 { width: 62px; }
.small { display: flex; flex-direction: column; align-items: flex-start; gap: 5px; padding-left: 2px; }
.small button { height: 16px; gap: 3px; }
.small svg { width: 15px; height: 15px; }
.small .tri { margin-left: 2px; }
.para { padding: 3px 4px 0; gap: 5px; }
.pcol { display: flex; flex-direction: column; flex: 1; }
.pcol + .pcol { padding-left: 4px; border-left: 1px solid #9bb8dd; flex: 1 1 4px; }
.pcol h3 { height: 17px; line-height: 16px; }
.prow { display: flex; align-items: center; height: 21px; gap: 3px; padding-left: 2px; }
.prow svg { width: 15px; height: 15px; }
.prow label { flex: 1; }
.pspin { display: flex; width: 67px; height: 20px; background: #eaf2fb; border: 1px solid #abc1de; }
.pspin input { width: 48px; border: 0; background: none; padding: 0 2px; color: #222; }
.pspin > span { display: flex; flex-direction: column; justify-content: center; gap: 4px; padding-left: 6px; }
.pspin i { background: #1f3f7a; }

.work { display: flex; flex: 1; min-height: 0; position: relative; background: linear-gradient(#a3c3ec 0, #9dbde7 30px, #5a80b4 570px, #6592cf 100%); }
.canvas { position: relative; flex: 1; }
.sweep { position: absolute; left: 0; top: 0; width: 440px; height: 170px; }
.sheet { position: absolute; left: 400px; width: 788px; top: 34px; bottom: 0; background: #fff; border: 1px solid #111; border-bottom: 0; box-shadow: 4px 4px 5px #3f5f8c; overflow: hidden; }
.shot { position: absolute; overflow: hidden; }
.shot0 { left: 401px; top: 38px; width: 376px; }
.shot1 { left: 791px; top: 18px; width: 396px; height: 546px; border: 3px solid #f00; padding: 9px 0 0 8px; background: linear-gradient(#a0c0ea, #5a80b4); }
.shot2 { left: 1199px; top: 26px; width: 387px; height: 536px; border: 3px solid #f00; padding: 3px 0 0 0; background: #fff; z-index: 2; }
.under { position: absolute; left: 7px; top: 5px; right: 0; bottom: 0; background: #fff; border: 1px solid #111; border-width: 1px 0 0 1px; }
.frag { position: absolute; left: 383px; top: 152px; color: #111; font: 22px/28px "Liberation Serif", serif; }
.f1 { left: 375px; top: 144px; }
.dots { position: absolute; left: 383px; top: 224px; color: #446; font: 10px/14px "Liberation Sans", sans-serif; white-space: nowrap; }
.d1 { left: 375px; top: 218px; }
.shot2 .frag { left: 375px; top: 146px; } .shot2 .dots { left: 376px; top: 218px; }

.dialog { position: relative; display: flex; flex-direction: column; width: 376px; height: 519px; color: #111; font-size: 10px; line-height: 14px; background: #e0dfe3; border: 2px solid #8a8ba2; border-top: 1px solid #77788f; border-radius: 7px 7px 0 0; box-shadow: inset 1px 0 0 #fff, inset -1px -1px 0 #f6f6fa; padding: 0 6px 0 6px; }
.dialog header { display: flex; align-items: center; gap: 2px; height: 26px; margin: 0 -6px; padding: 0 4px; border-radius: 6px 6px 0 0; border-bottom: 2px solid #8e8fa6; background: linear-gradient(#f2f2f6, #e2e2ec 4px, #a9aac4 8px, #b9bacf 12px, #eef0f6 20px, #fff); }
.dialog header h2 { flex: 1; color: #0c1020; font: 12px/16px "Noto Sans", sans-serif; padding-top: 2px; text-shadow: 0 0 1px #556; }
.dialog header button { width: 20px; height: 20px; border-radius: 3px; margin-top: 1px; border: 1px solid #6c6e8e; }
.q { font: bold 15px/18px "Liberation Sans", sans-serif; color: #3a3a4a; background: linear-gradient(135deg, #f4f4fa, #a6a8c4); }
.x { background: linear-gradient(135deg, #ee8e86, #c63a34); border-color: #8d2a2a !important; }
.x svg { width: 12px; height: 12px; }
.dtabs { display: flex; align-items: flex-end; height: 27px; padding-left: 2px; gap: 2px; }
.dtabs button { width: 49px; height: 18px; border: 1px solid #9a9db0; border-bottom: 0; border-radius: 2px 2px 0 0; background: linear-gradient(#fdfdff, #e8e8f2 60%, #cdcde0); position: relative; }
.dtabs .on { width: 53px; height: 20px; margin: 0 -2px -1px; border-top: 3px solid #f5a623; background: #fcfcfe; z-index: 1; padding-bottom: 1px; }
.foc span { outline: 1px dotted #333; padding: 0 5px; }
.panel { border: 1px solid #9b9fa2; height: 425px; width: 358px; padding: 7px 6px 0 7px; background: #fcfcfe; display: flex; flex-direction: column; }
.upper { height: 251px; display: flex; flex-direction: column; }
.panel h4 { display: flex; align-items: center; gap: 6px; height: 16px; flex: none; color: #2350d2; }
.panel h4::after { content: ""; flex: 1; height: 1px; background: #c9c7c8; }
.mt8 { margin-top: 8px !important; } .mt5 { margin-top: 5px !important; } .mt6 { margin-top: 7px !important; }
.mgrid { display: grid; grid-template-columns: 59px 84px 1fr 85px; gap: 3px 0; grid-auto-rows: 19px; align-items: center; margin: 4px 0 0 9px; }
.c3 { padding-left: 17px; }
.dim { color: #a8a698; }
.spin { display: flex; height: 19px; background: #fff; border: 1px solid #a9b5c4; }
.spin input { flex: 1; min-width: 0; border: 0; background: none; padding: 0 2px; }
.spin > span { display: flex; flex-direction: column; width: 16px; padding: 1px; }
.spin button { flex: 1; border: 1px solid #a4a7b8; border-radius: 2px; background: linear-gradient(#fff, #d5d5e2); }
.spin i { background: #222; width: 7px; height: 4px; }
.combo { display: flex; height: 20px; background: #fff; border: 1px solid #7f9db9; }
.combo select { flex: 1; min-width: 0; appearance: none; border: 0; background: none; padding: 0 0 0 2px; border-radius: 0; }
.combo .drop { display: flex; align-items: center; justify-content: center; width: 16px; margin: 0; border: 1px solid #8d90a6; border-radius: 2px; background: linear-gradient(#fafafd, #cfcfdf); }
.drop svg, .bar svg { width: 9px; height: 8px; fill: none; stroke: #222; stroke-width: 2; }
.dis { background: #ebebe4; border-color: #c9c7ba; }
.dis select { color: #a8a698; opacity: 1; }
.dis .drop { border-color: #dcdcd2; background: #efefea; } .dis svg { stroke: #b8b8ac; }
.hot select { margin: 2px; padding: 0; background: #b2b4bf; outline: 1px dotted #555; }
.w113 { width: 113px; } .w71 { width: 71px; } .w87 { width: 87px; } .w89 { width: 89px; }
.l99 { width: 99px; } .l93 { width: 93px; } .l51 { width: 51px; } .l52 { width: 52px; } .l53 { width: 53px; }
.row { display: flex; align-items: center; margin-left: 9px; }
.r1 { margin-top: 5px; } .r2 { margin-top: 4px; }
.orients { display: flex; gap: 8px; margin: 5px 0 0 9px; }
.orients button { flex-direction: column; width: 55px; gap: 2px; }
.orients button > span:first-child { display: flex; align-items: center; justify-content: center; width: 55px; height: 45px; background: #fff; border: 1px solid #7f9db9; }
.orients .sel > span:first-child { box-shadow: inset 0 0 0 2px #fff, inset 0 0 0 4px #a6a7b8; }
.orients svg { width: 30px; height: 30px; }
.sizes { display: grid; grid-template-columns: 42px 85px; grid-template-rows: 21px 19px 19px; gap: 3px 0; align-items: center; margin: 4px 0 0 9px; }
.sizes .combo { grid-column: 1 / 3; height: 21px; }
.lists { display: grid; grid-template-columns: 163px 162px; gap: 9px; margin: 4px 0 0 9px; }
.lists label { display: block; height: 15px; }
.list { display: flex; height: 115px; border: 1px solid #7f9db9; background: #fff; padding: 1px; }
.list select { flex: 1; min-width: 0; border: 0; border-radius: 0; background: none; padding: 0; overflow: hidden; outline: none; }
.list option { padding: 0 1px; height: 12px; min-height: 12px; line-height: 12px; }
.list option:checked { background: #b2b4bf linear-gradient(#b2b4bf, #b2b4bf); color: #111; }
.bar { display: flex; flex-direction: column; justify-content: space-between; width: 16px; background: #f8f8f6; border-left: 1px solid #eeeee8; }
.bar i { display: flex; align-items: center; justify-content: center; height: 16px; border: 1px solid #deded4; border-radius: 2px; background: #f1f1ec; }
.bar svg { stroke: #c4c4b8; }
.chk { display: flex; align-items: center; gap: 3px; height: 18px; margin-left: 9px; }
.chk input { appearance: none; width: 13px; height: 13px; border: 1px solid #1c5180; background: linear-gradient(135deg, #dcdcd7, #fff); }
.chk.dim input { border-color: #cac8bb; background: #fff; }
.first { margin-top: 3px; height: 16px; } .second { margin-top: 2px; }
.edge { display: grid; grid-template-columns: 93px 46px 67px; grid-auto-rows: 19px; gap: 3px 0; align-items: center; margin: 2px 0 0 9px; }
.from { grid-row: 1 / 3; padding-bottom: 2px; }
.previews { display: flex; gap: 14px; margin: 6px 0 0 14px; }
.previews svg { width: 61px; height: 95px; filter: drop-shadow(2px 2px 2px #999); }
.apply { display: flex; align-items: center; margin: 19px 1px 0 0; }
.apply label { padding-top: 2px; }
.apply .combo { height: 21px; }
.push { margin-left: auto; }
.apply .w71 { margin-left: 9px; }
.btn { height: 21px; border: 1px solid #31608c; border-radius: 3px; background: linear-gradient(#fff, #f1f1f7 60%, #cfcfe0); box-shadow: inset 0 0 0 1px #fff4; }
.ok { box-shadow: inset 0 0 0 1px #a9c0ea, inset 0 -2px 0 #7f9fdc; }
.dialog footer { display: flex; gap: 9px; margin: 9px 2px 0 0; }

.scroll { display: flex; flex-direction: column; width: 15px; background: #a4c2ef; position: relative; }
.tools { height: 24px; padding: 1px 0 0 1px; }
.tools svg { width: 12px; height: 22px; }
.track { display: flex; flex-direction: column; flex: 1; background: linear-gradient(90deg, #6f90c0, #7f9fcd); margin: 0 1px; }
.track button { height: 16px; flex: none; }
.track i { background: #3b4a66; width: 8px; height: 5px; }
.track button:last-child { margin-top: auto; }
.thumb { height: 49px; display: flex; align-items: center; justify-content: center; background: linear-gradient(90deg, #f3f7fc, #c6d6ea); border: 1px solid #7d95b8; border-radius: 2px; }
.track .thumb i { width: 7px; height: 8px; background: repeating-linear-gradient(#7588a6 0 1px, transparent 1px 3px); }
.jump { display: flex; flex-direction: column; justify-content: space-around; height: 50px; align-items: center; }
.jump svg { width: 8px; height: 8px; }

.status { display: flex; position: relative; z-index: 1; align-items: center; height: 22px; flex: none; font-size: 10px; color: #1d2f6b; background: linear-gradient(#e6effc 0, #cfe1fb 6px, #b4d0f7 9px, #d7e7fd 100%); border-top: 1px solid #567db1; }
.status > span, .s3 { height: 19px; line-height: 19px; border-right: 1px solid #8eb0de; }
.s1 { padding-left: 8px; width: 74px; } .s2 { padding-left: 8px; width: 72px; }
.s3 { width: 31px; padding-left: 0; border: 0 !important; } .s3 svg { width: 16px; height: 16px; }
.s4 { padding-left: 8px; width: 80px; }
.sright { display: flex; align-items: center; height: 21px; margin-left: auto; width: 269px; padding: 0 5px 0 6px; border-left: 1px solid #6f93c6; background: linear-gradient(#b5cef2 0, #a7c3ee 7px, #86a9dd 9px, #a5c4f0); }
.views { display: flex; height: 17px; background: linear-gradient(#dfe9f7, #c6d8f1); border: 1px solid #e3edfa; }
.views button { width: 17px; border-right: 1px solid #b9cce6; }
.views .on { background: linear-gradient(#fbe3a8, #f7b64c 50%, #fbd978); }
.views svg { width: 12px; height: 12px; }
.pct { width: 41px; text-align: center; font-size: 11px; padding-left: 2px; }
.zb { flex: none; } .zb svg { width: 16px; height: 16px; }
.zoom { appearance: none; flex: 1; min-width: 0; height: 16px; background: linear-gradient(transparent 7px, #6a8bbd 7px 8px, #dbe7f8 8px 9px, transparent 9px); }
.zoom::-webkit-slider-thumb { appearance: none; width: 9px; height: 13px; background: #e6eefa; border: 1px solid #44618f; border-radius: 1px 1px 5px 5px; }

.rings { position: absolute; left: 0; top: 0; width: 100%; height: 100%; pointer-events: none; z-index: 5; }
.rings ellipse { fill: none; stroke: #f00; stroke-width: 3px; }
</style>
